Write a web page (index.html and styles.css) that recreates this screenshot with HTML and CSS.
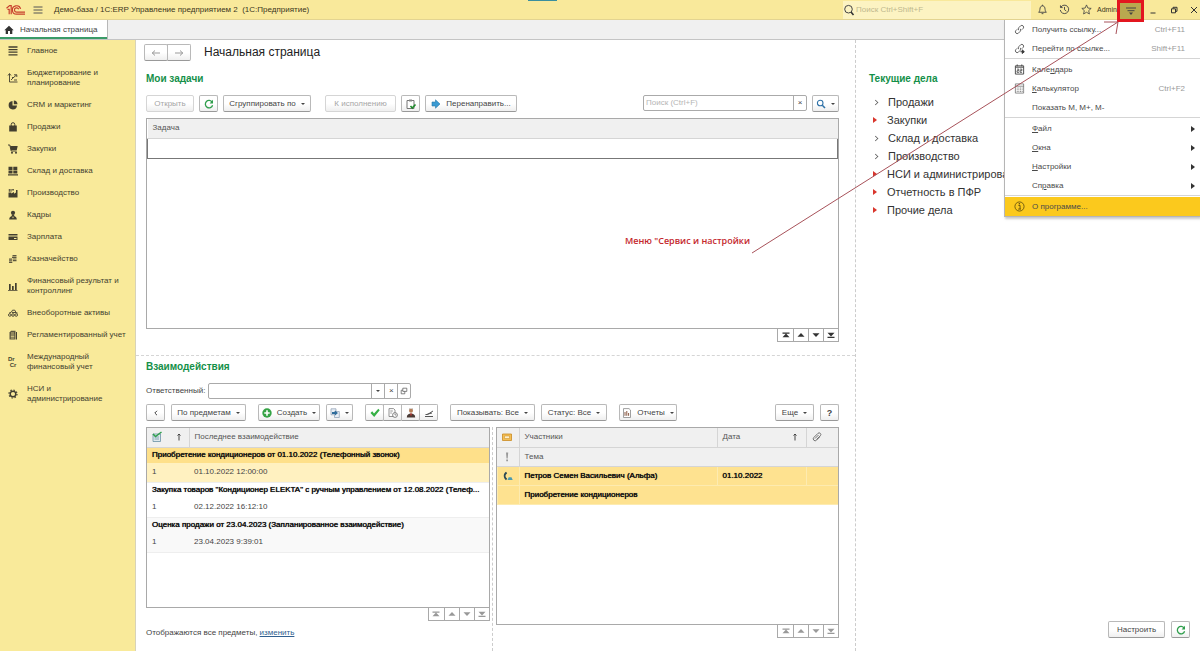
FILE: index.html
```html
<!DOCTYPE html>
<html lang="ru">
<head>
<meta charset="utf-8">
<title>1С:ERP Управление предприятием 2</title>
<link rel="stylesheet" href="styles.css">
</head>
<body>
<svg class="defs" aria-hidden="true">
  <symbol id="refresh" viewBox="0 0 10 10"><path d="M8.2 3.2A3.7 3.7 0 1 0 8.6 6.2" fill="none" stroke="#2f9e4c" stroke-width="1.3"/><path d="M9 .8v3.6H5.6z" fill="#2f9e4c"/></symbol>
  <symbol id="first" viewBox="0 0 8 6"><path d="M.5 .5h7v1.2h-7zM4 1.6l3.5 3.6h-7z"/></symbol>
  <symbol id="up" viewBox="0 0 8 6"><path d="M4 1l3.5 3.8h-7z"/></symbol>
  <symbol id="down" viewBox="0 0 8 6"><path d="M4 5L.5 1.2h7z"/></symbol>
  <symbol id="last" viewBox="0 0 8 6"><path d="M.5 4.8h7V6h-7zM4 4.6L.5 .8h7z"/></symbol>
  <symbol id="link" viewBox="0 0 12 12"><g fill="none" stroke="#555" stroke-width="1"><path d="M5.2 6.8a2 2 0 0 1 0-2.8L7.300 1.900a2 2 0 0 1 2.800 2.800L8.600 6.200"/><path d="M6.800 5.200a2 2 0 0 1 0 2.800L4.700 10.100a2 2 0 0 1-2.800-2.800L3.400 5.800"/></g></symbol>
</svg>

<header class="titlebar">
  <svg class="logo" viewBox="0 0 20 12" role="img" aria-label="1С"><g fill="none" stroke="#c8402c" stroke-width="1.200"><path d="M.5 4.200L3.600 1.600H5.200V10.300M1.500 5.300h1.700V10.300"/><path d="M14.600 4.800A4.200 4.200 0 1 0 10.700 10.200H19"/><path d="M12.700 5.200A2.200 2.200 0 1 0 10.700 8.200H19"/></g></svg>
  <button class="flat burger" aria-label="Меню"><svg viewBox="0 0 10 8"><path d="M.5 1h9M.5 4h9M.5 7h9" stroke="#555" fill="none"/></svg></button>
  <span class="apptitle">Демо-база / 1С:ERP Управление предприятием 2&nbsp; (1С:Предприятие)</span>
  <i class="marker"></i>
  <label class="globalsearch">
    <svg viewBox="0 0 12 12"><circle cx="5.500" cy="5.200" r="3.800" fill="none" stroke="#444"/><path d="M8 8l2.500 3" stroke="#333" stroke-width="1.600"/></svg>
    <input type="text" placeholder="Поиск Ctrl+Shift+F" aria-label="Поиск">
  </label>
  <div class="sysicons">
    <button class="flat" aria-label="Уведомления"><svg viewBox="0 0 12 12"><path d="M1.800 9h8.400C8.800 7.800 9 6.500 8.600 4.400 8.300 2.800 7.300 2 6 2S3.700 2.800 3.400 4.400C3 6.500 3.200 7.800 1.800 9zM5 10.500h2M6 .8V2" fill="none" stroke="#444"/></svg></button>
    <button class="flat" aria-label="История"><svg viewBox="0 0 12 12"><path d="M2 3.500A4.600 4.600 0 1 1 1.400 6.500M1.600 1.500v2.400H4M6 3.200v3l2 1.500" fill="none" stroke="#444"/></svg></button>
    <button class="flat" aria-label="Избранное"><svg viewBox="0 0 12 12"><path d="M6 1l1.500 3.400 3.600.4-2.700 2.400.8 3.700L6 9 2.800 10.900l.8-3.700L.9 4.800l3.600-.4z" fill="none" stroke="#444" stroke-width=".9"/></svg></button>
  </div>
  <span class="user">Admin</span>
  <button class="service" aria-label="Сервис и настройки"><svg viewBox="0 0 10 8"><path d="M0 1h10M1.500 3.700h7" stroke="#444" fill="none"/><path d="M3 5.500h4L5 8z" fill="#444"/></svg></button>
  <div class="wincontrols">
    <button class="flat" aria-label="Свернуть"><svg viewBox="0 0 10 10"><path d="M1.500 8h5" stroke="#333"/></svg></button>
    <button class="flat" aria-label="Восстановить"><svg viewBox="0 0 10 10"><path d="M2.500 3.800h4v4h-4zM4 3.500V2.300h4v4H6.800" fill="none" stroke="#333"/></svg></button>
    <button class="flat" aria-label="Закрыть"><svg viewBox="0 0 10 10"><path d="M2 2l6 6M8 2L2 8" stroke="#333"/></svg></button>
  </div>

  <nav class="menu" aria-label="Сервис и настройки">
    <button><svg><use href="#link"/></svg><span>Получить ссылку...</span><kbd>Ctrl+F11</kbd></button>
    <button><svg viewBox="0 0 12 12"><use href="#link"/><path d="M7 9.500h3.500M9 7.500l2.300 2L9 11.500z" stroke="#333" fill="#333"/></svg><span>Перейти по ссылке...</span><kbd>Shift+F11</kbd></button>
    <hr>
    <button><svg viewBox="0 0 12 12"><path d="M1.500 2h9v9h-9zM1.500 3.500h9M3.500.5v2M8.500.5v2" fill="none" stroke="#444"/><path d="M3.300 5.600h2v1.700h-2v1.800h2.200M6.600 5.600h2v1.700h-2v1.800h2.200" fill="none" stroke="#444" stroke-width=".9"/></svg><span>Кале<u>н</u>дарь</span></button>
    <button><svg viewBox="0 0 12 12"><path d="M1.500 1h9v10h-9zM1.500 3.500h9" fill="none" stroke="#666" stroke-width=".8"/><path d="M3 5.500h6.500M3 7.400h6.500M3 9.300h6.500" stroke="#777" stroke-dasharray="1 .8"/></svg><span><u>К</u>алькулятор</span><kbd>Ctrl+F2</kbd></button>
    <button><svg></svg><span>Показать М, М+, М-</span></button>
    <hr>
    <button class="sub"><svg></svg><span><u>Ф</u>айл</span></button>
    <button class="sub"><svg></svg><span><u>О</u>кна</span></button>
    <button class="sub"><svg></svg><span><u>Н</u>астройки</span></button>
    <button class="sub"><svg></svg><span>Сп<u>р</u>авка</span></button>
    <hr>
    <button class="active"><svg viewBox="0 0 12 12"><circle cx="6" cy="6" r="5" fill="none" stroke="#5b4a10" stroke-width=".9"/><path d="M4.800 4.800h1.800v4M4.600 8.800h3" fill="none" stroke="#5b4a10"/><path d="M5.200 2.300h1.400v1.300H5.200z" fill="#5b4a10"/></svg><span>О программе...</span></button>
  </nav>
  <div class="callout">
    <svg viewBox="0 0 372 236"><path d="M0 233L366 2M352 2h14l-2 12" fill="none" stroke="#a8525a"/></svg>
    <strong>Меню "Сервис и настройки</strong>
  </div>
</header>

<div class="tabs">
  <a class="tab" href="#"><svg viewBox="0 0 10 10"><path d="M5 .8L.3 5.300h1.400V9h2.300V6h2v3h2.300V5.300h1.400z" fill="#333"/></svg><span>Начальная страница</span></a>
</div>

<div class="workspace">
  <nav class="sidebar">
    <a href="#"><svg viewBox="0 0 10 10"><path d="M.5 1h9M.5 3.600h9M.5 6.200h9M.5 8.800h9" stroke="#433f30" stroke-width="1.300"/></svg><span>Главное</span></a>
    <a href="#"><svg viewBox="0 0 10 10"><path d="M1.500 1v8h8M0 2.500L1.500.5 3 2.500M3 7l2.500-2.500L8.500 2M6 1.800h2.800V4M4 4.500h2M6 7h3" fill="none" stroke="#433f30" stroke-width=".9"/></svg><span>Бюджетирование и планирование</span></a>
    <a href="#"><svg viewBox="0 0 10 10"><path d="M4.500 1v4.500H9A4.200 4.200 0 1 1 4.500 1z" fill="#433f30"/><path d="M5.800.5A4 4 0 0 1 9.500 4.300H5.800z" fill="#433f30"/></svg><span>CRM и маркетинг</span></a>
    <a href="#"><svg viewBox="0 0 10 10"><path d="M1.200 3.500h7.600v6H1.200z" fill="#433f30"/><path d="M3.200 5V2.500a1.800 1.800 0 0 1 3.600 0V5" fill="none" stroke="#433f30"/></svg><span>Продажи</span></a>
    <a href="#"><svg viewBox="0 0 10 10"><path d="M0 1h1.800l1.400 6h5.500" fill="none" stroke="#433f30"/><path d="M2.200 2h7.500L8.800 6H3z" fill="#433f30"/><circle cx="4" cy="8.800" r="1" fill="#433f30"/><circle cx="8" cy="8.800" r="1" fill="#433f30"/></svg><span>Закупки</span></a>
    <a href="#"><svg viewBox="0 0 10 10"><path d="M.5.8h4v3.400h-4zM5.300.8h4v3.400h-4zM.5 4.800h4v2.700h-4zM5.300 4.800h4v2.700h-4zM0 8.300h10v1.200H0z" fill="#433f30"/></svg><span>Склад и доставка</span></a>
    <a href="#"><svg viewBox="0 0 10 10"><path d="M.5 9.500V4.500h2.800v1L6 4v1.800L8 4.500V2h1.500v7.500zM.8 1h1v2.700h-1zM2.500 1h1v2.700h-1zM4.300 1h1.500v1.500H4.300z" fill="#433f30"/></svg><span>Производство</span></a>
    <a href="#"><svg viewBox="0 0 10 10"><circle cx="5" cy="2.800" r="2.100" fill="#433f30"/><path d="M1.200 9.500c0-2.500 1.500-3 2.600-3.500V4.500h2.400V6c1.100.5 2.600 1 2.600 3.500z" fill="#433f30"/><path d="M4.200 6.800h1.600L5 8.500z" fill="#f9ea9a"/></svg><span>Кадры</span></a>
    <a href="#"><svg viewBox="0 0 10 10"><path d="M.5 2h9v1.500h-9zM.5 4.500h9V8h-9z" fill="#433f30"/><path d="M6 6.500h2.500" stroke="#f9ea9a"/></svg><span>Зарплата</span></a>
    <a href="#"><svg viewBox="0 0 10 10"><path d="M4.500 1h4v1.200h-4zM4 2.700h4.500v1.200H4zM5 4.400h3.500v1.200H5zM5 6h3.500v1.200H5zM1 4.500h3.300v1.200H1zM1 6.200h3.300v1.200H1zM1 7.900h3.300v1.200H1z" fill="#5d573f"/></svg><span>Казначейство</span></a>
    <a href="#"><svg viewBox="0 0 10 10"><path d="M1 3h1.700v6H1zM4 5h1.700v4H4zM7 2h1.700v7H7zM0 9h9.500v.8H0z" fill="#433f30"/></svg><span>Финансовый результат и контроллинг</span></a>
    <a href="#"><svg viewBox="0 0 10 10"><g fill="none" stroke="#433f30" stroke-width=".9"><circle cx="1.800" cy="7" r="1.300"/><circle cx="5" cy="7" r="1.300"/><circle cx="8.200" cy="7" r="1.300"/><path d="M1 5.200L3.500 4l1-1.800h2.300L8 4.600l1.700.6M4 4.500h4"/></g></svg><span>Внеоборотные активы</span></a>
    <a href="#"><svg viewBox="0 0 10 10"><path d="M1.500 2.500L3 .8h4.500v8.700h-6z" fill="#5d573f"/><path d="M3 3h3M2.800 5h3.500M2.800 6.500h3.500M2.800 8h3.500" stroke="#f9ea9a" stroke-width=".7"/><path d="M8.500 2v7.500" stroke="#433f30"/></svg><span>Регламентированный учет</span></a>
    <a href="#"><b class="drcr">Dr<br>&nbsp;Cr</b><span>Международный финансовый учет</span></a>
    <a href="#"><svg viewBox="0 0 10 10"><circle cx="5" cy="5" r="2.800" fill="none" stroke="#433f30" stroke-width="1.400"/><circle cx="5" cy="5" r="4" fill="none" stroke="#433f30" stroke-width="1.200" stroke-dasharray="1.400 1.740"/></svg><span>НСИ и администрирование</span></a>
  </nav>

  <main class="main">
    <div class="left">
      <section class="tasks">
        <div class="pagehead">
          <div class="group">
            <button class="btn hist" aria-label="Назад"><svg viewBox="0 0 10 8"><path d="M1 4h8M4 1.500L1.300 4 4 6.500" fill="none" stroke="#999"/></svg></button><button class="btn hist" aria-label="Вперед"><svg viewBox="0 0 10 8"><path d="M1 4h8M6 1.500L8.700 4 6 6.500" fill="none" stroke="#999"/></svg></button>
          </div>
          <h1>Начальная страница</h1>
        </div>
        <h2>Мои задачи</h2>
        <div class="toolbar">
          <button class="btn w-m off">Открыть</button>
          <button class="btn w-s" aria-label="Обновить"><svg><use href="#refresh"/></svg></button>
          <button class="btn w-xl drop">Сгруппировать по</button>
          <button class="btn w-l off apart">К исполнению</button>
          <button class="btn w-s" aria-label="Выполнить"><svg viewBox="0 0 10 10"><path d="M1 1.500h7v8H1z" fill="#fff" stroke="#777"/><path d="M3 .5h3v2H3z" fill="#888"/><path d="M4.500 7l1.800 2L9.500 5.500" fill="none" stroke="#1f8a2c" stroke-width="1.600"/></svg></button>
          <button class="btn w-xxl"><svg viewBox="0 0 10 10"><path d="M1 3h3.500V.8L9 5 4.500 9.200V7H1z" fill="#3a9bd3" stroke="#2878a8" stroke-width=".6"/></svg>Перенаправить...</button>
          <div class="search">
            <input type="text" placeholder="Поиск (Ctrl+F)" aria-label="Поиск задачи"><button aria-label="Очистить">×</button>
          </div>
          <button class="btn w-find drop" aria-label="Найти"><svg viewBox="0 0 10 10"><circle cx="4.200" cy="4" r="2.800" fill="none" stroke="#2f72a8" stroke-width="1.100"/><path d="M6.300 6.200L9 9" stroke="#2f72a8" stroke-width="1.500"/></svg></button>
        </div>
        <div class="grid">
          <table><thead><tr><th>Задача</th></tr></thead><tbody><tr class="focus"><td></td></tr></tbody></table>
        </div>
        <div class="pager">
          <button aria-label="В начало"><svg><use href="#first"/></svg></button><button aria-label="Вверх"><svg><use href="#up"/></svg></button><button aria-label="Вниз"><svg><use href="#down"/></svg></button><button aria-label="В конец"><svg><use href="#last"/></svg></button>
        </div>
      </section>

      <section class="interactions">
        <h2>Взаимодействия</h2>
        <div class="field">
          <label for="resp">Ответственный:</label>
          <div class="combo">
            <input id="resp" type="text"><button aria-label="Выбрать"><i class="caret"></i></button><button aria-label="Очистить">×</button><button aria-label="Открыть"><svg viewBox="0 0 10 10"><path d="M3.500 1.500h5v4h-5zM3.500 4H1.500v4.500h4.500V5.500" fill="none" stroke="#555" stroke-width=".9"/></svg></button>
          </div>
        </div>
        <div class="toolbar">
          <button class="btn w-s" aria-label="Скрыть"><svg viewBox="0 0 10 10"><path d="M6 2.800L3.800 5 6 7.200" fill="none" stroke="#444"/></svg></button>
          <button class="btn w-sub drop">По предметам</button>
          <button class="btn w-new drop apart"><svg viewBox="0 0 10 10"><circle cx="5" cy="5" r="4.700" fill="#35a345"/><path d="M5 2.300v5.400M2.300 5h5.400" stroke="#fff" stroke-width="1.600"/></svg>Создать</button>
          <button class="btn w-find drop" aria-label="Создать на основании"><svg viewBox="0 0 10 10"><path d="M1 .8h5v6H1z" fill="#e8eef5" stroke="#8a9bb0" stroke-width=".7"/><path d="M4.500 3.500h4.800v6H4.500z" fill="#e8eef5" stroke="#8a9bb0" stroke-width=".7"/><path d="M2 4h3V2.500L8 5 5 7.500V6H2z" fill="#2f6d9c"/></svg></button>
          <div class="group apart">
            <button class="btn w-s" aria-label="Рассмотрено"><svg viewBox="0 0 10 10"><path d="M.5 5L2.200 3.300 4 5.500 8.300.8 9.700 2.200 4.200 9z" fill="#35b045"/></svg></button><button class="btn w-s" aria-label="Отложить"><svg viewBox="0 0 10 10"><path d="M1 .6h4.500L7 2v6.500H1z" fill="#fff" stroke="#777" stroke-width=".8"/><circle cx="7" cy="7" r="2.400" fill="#fff" stroke="#666" stroke-width=".8"/><path d="M7 5.500V7h1.300M2.300 3h2.500M2.300 5h1.500" stroke="#666" stroke-width=".7" fill="none"/></svg></button><button class="btn w-s" aria-label="Ответственный"><svg viewBox="0 0 10 10"><circle cx="5" cy="2.700" r="2" fill="#b87e58"/><path d="M3 2.300a2 2 0 0 1 4 0V1.500A1.500 1.500 0 0 0 5 .3 1.500 1.500 0 0 0 3 1.500z" fill="#3c2b22"/><path d="M.8 9.500c0-3 2-4 4.200-4s4.200 1 4.200 4z" fill="#4a3a35"/><path d="M4 5.500h2L5 8.500z" fill="#c53a36"/></svg></button><button class="btn w-s" aria-label="Тема"><svg viewBox="0 0 10 10"><path d="M1 8.500h8M9 3L3.500 6.500H1.500M3 6.300L8 5" fill="none" stroke="#555"/></svg></button>
          </div>
          <button class="btn w-show drop apart">Показывать: Все</button>
          <button class="btn w-stat drop">Статус: Все</button>
          <button class="btn w-rep drop apart"><svg viewBox="0 0 10 10"><path d="M1.500.6H7L8.500 2v7.500h-7z" fill="#fff" stroke="#888" stroke-width=".8"/><path d="M3 7.800V4M4.800 7.800V3M6.600 7.800V5" stroke="#8a5a44"/></svg>Отчеты</button>
          <button class="btn w-more drop end">Еще</button>
          <button class="btn w-s help">?</button>
        </div>
        <div class="panes">
          <div class="pane">
            <div class="grid">
              <table class="subjects">
                <colgroup><col class="c-num"><col></colgroup>
                <thead><tr><th><span class="pair"><svg viewBox="0 0 10 10"><path d="M1 2h7.500v7.500H1z" fill="#dfe9ee" stroke="#6a92a5" stroke-width=".8"/><path d="M2.500 5h4.500M2.500 7h4.500" stroke="#6a92a5" stroke-width=".8"/><path d="M1 2l2.500 2.500L9.500 0" fill="none" stroke="#2f9e4c" stroke-width="1.500"/></svg><svg viewBox="0 0 10 10"><path d="M5 8.500V2M3.500 3.500L5 2l1.500 1.500" fill="none" stroke="#444"/></svg></span></th><th>Последнее взаимодействие</th></tr></thead>
                <tbody class="sel"><tr class="title"><td colspan="2">Приобретение кондиционеров от 01.10.2022 (Телефонный звонок)</td></tr><tr><td>1</td><td>01.10.2022 12:00:00</td></tr></tbody>
                <tbody><tr class="title"><td colspan="2">Закупка товаров "Кондиционер ELEKTA" с ручным управлением от 12.08.2022 (Телеф...</td></tr><tr><td>1</td><td>02.12.2022 16:12:10</td></tr></tbody>
                <tbody class="alt"><tr class="title"><td colspan="2">Оценка продажи от 23.04.2023 (Запланированное взаимодействие)</td></tr><tr><td>1</td><td>23.04.2023 9:39:01</td></tr></tbody>
              </table>
            </div>
            <div class="pager dim">
              <button aria-label="В начало"><svg><use href="#first"/></svg></button><button aria-label="Вверх"><svg><use href="#up"/></svg></button><button aria-label="Вниз"><svg><use href="#down"/></svg></button><button aria-label="В конец"><svg><use href="#last"/></svg></button>
            </div>
            <p class="note">Отображаются все предметы, <a href="#">изменить</a></p>
          </div>
          <div class="splitter"></div>
          <div class="pane">
            <div class="grid">
              <table class="mails">
                <colgroup><col class="c-icon"><col><col class="c-date"><col class="c-clip"></colgroup>
                <thead>
                  <tr><th><svg viewBox="0 0 10 10"><path d="M.5 2h9v6.500h-9z" fill="#f4bf55" stroke="#c98a22" stroke-width=".8"/><path d="M2.500 4h5v2.500h-5z" fill="#fdf0cd" stroke="#c98a22" stroke-width=".5"/></svg></th><th>Участники</th><th><span class="spread">Дата<svg viewBox="0 0 10 10"><path d="M5 8.500V2M3.500 3.500L5 2l1.500 1.500" fill="none" stroke="#444"/></svg></span></th><th><svg viewBox="0 0 10 10"><path d="M3 6.500L6.500 3M7.800 4.800L4.500 8.200a1.900 1.900 0 0 1-2.700-2.700L6 1.300a1.700 1.700 0 0 1 2.400 2.400L4.500 7.500" fill="none" stroke="#666" stroke-width=".9"/></svg></th></tr>
                  <tr><th><svg viewBox="0 0 10 10"><path d="M4 .5h2.200L5.700 6.500H4.500zM4.200 7.500h1.800v1.800H4.200z" fill="#999"/></svg></th><th colspan="3">Тема</th></tr>
                </thead>
                <tbody>
                  <tr><td><svg viewBox="0 0 10 10"><path d="M3 .8C0 2.500 0 7 3 9.200l1.200-1.500-1-1C2.300 5.500 2.300 4.500 3.200 3.300l1-1z" fill="#2c4a55"/><path d="M4.500 9l1.200-2.800h2.800L9.700 9z" fill="#4a9ab0"/></svg></td><td>Петров Семен Васильевич (Альфа)</td><td>01.10.2022</td><td></td></tr>
                  <tr><td></td><td colspan="3">Приобретение кондиционеров</td></tr>
                </tbody>
              </table>
            </div>
            <div class="pager dim">
              <button aria-label="В начало"><svg><use href="#first"/></svg></button><button aria-label="Вверх"><svg><use href="#up"/></svg></button><button aria-label="Вниз"><svg><use href="#down"/></svg></button><button aria-label="В конец"><svg><use href="#last"/></svg></button>
            </div>
          </div>
        </div>
      </section>
    </div>

    <aside class="right">
      <h2>Текущие дела</h2>
      <ul>
        <li>Продажи</li>
        <li class="hot">Закупки</li>
        <li>Склад и доставка</li>
        <li>Производство</li>
        <li class="hot">НСИ и администрирование</li>
        <li class="hot">Отчетность в ПФР</li>
        <li class="hot">Прочие дела</li>
      </ul>
      <div class="foot">
        <button class="btn w-conf">Настроить</button>
        <button class="btn w-s" aria-label="Обновить"><svg><use href="#refresh"/></svg></button>
      </div>
    </aside>
  </main>
</div>
</body>
</html>
```
FILE: styles.css
```css
* { box-sizing: border-box; }
body {
  margin: 0;
  min-height: 100vh;
  display: flex;
  flex-direction: column;
  font: 8px/10px "Liberation Sans", Arial, sans-serif;
  color: #444;
  background: #fff;
}
button, input { font: inherit; color: inherit; margin: 0; padding: 0; border: 0; background: none; min-width: 0; }
input:focus { outline: 0; }
::placeholder { color: #b5b5b5; opacity: 1; }
h1, h2, ul, p { margin: 0; padding: 0; font-weight: normal; }
svg { width: 10px; height: 10px; flex: none; display: block; overflow: visible; }
.defs { position: absolute; width: 0; height: 0; }

/* Title bar */
.titlebar { position: relative; display: flex; align-items: center; height: 20px; background: #f9e99b; border-bottom: 1px solid #e3d491; color: #3b3620; }
.logo { width: 20px; height: 12px; margin-left: 6px; }
.flat { display: flex; align-items: center; justify-content: center; width: 22px; height: 18px; }
.burger { margin-left: 1px; }
.burger svg { height: 8px; }
.apptitle { margin-left: 5px; white-space: nowrap; }
.marker { position: absolute; left: 44%; top: 0; width: 29px; height: 1px; background: #3a8f9e; }
.globalsearch { display: flex; align-items: center; width: 188px; height: 18px; margin-left: auto; background: #fcf3c2; }
.globalsearch svg { width: 12px; height: 12px; }
.globalsearch input { flex: 1; margin-left: 1px; }
.globalsearch ::placeholder { color: #c0b88e; }
.sysicons { display: flex; }
.sysicons svg { width: 11px; height: 11px; }
.user { width: 20px; font-size: 7px; white-space: nowrap; }
.service { display: flex; align-items: center; justify-content: center; width: 27px; height: 22px; margin-top: 3px; border: 3px solid #e3161f; background: #b9a84f; z-index: 3; }
.service svg { height: 8px; }
.wincontrols { display: flex; margin-right: -4px; }
.wincontrols .flat { width: 20px; }

/* Service menu */
.menu { position: absolute; z-index: 2; right: 0; top: 20px; width: 196px; background: #fff; border: solid #b5b5b5; border-width: 0 0 1px 1px; box-shadow: 1px 2px 2px #9998; color: #4a4a4a; }
.menu button { display: flex; align-items: center; width: 100%; height: 19px; padding: 0 15px 0 9px; text-align: left; }
.menu svg { width: 11px; height: 11px; margin-right: 7px; }
.menu kbd { margin-left: auto; font: inherit; color: #999; }
.menu hr { height: 2px; margin: 0; border: 0; border-top: 1px solid #d5d5d5; }
.menu .sub { padding-right: 5px; }
.menu .sub::after { content: ""; margin-left: auto; border: solid transparent; border-width: 3px 0 3px 4px; border-left-color: #333; }
.menu .active { background: #fbc91d; }
.callout { position: absolute; z-index: 4; right: 76px; top: 20px; pointer-events: none; }
.callout svg { width: 372px; height: 236px; }
.callout strong { position: absolute; right: 374px; top: 215px; white-space: nowrap; font: 600 9px/12px "Open Sans", sans-serif; color: #c4282d; }

/* Tabs */
.tabs { display: flex; height: 20px; background: #f0f0f0; border-bottom: 1px solid #c4c4c4; }
.tab { display: flex; align-items: center; gap: 6px; padding: 0 10px 0 4px; background: #fff; border-right: 1px solid #b8b8b8; box-shadow: inset 0 -2px #3a9b68; color: inherit; text-decoration: none; }

/* Sections panel */
.workspace { flex: 1; display: flex; }
.sidebar { flex: none; width: 136px; background: #f9ea9a; border-right: 1px solid #d8d3b8; }
.sidebar a { display: flex; align-items: center; gap: 9px; padding: 6px 8px; color: #433f30; text-decoration: none; }
.sidebar span { flex: 1; }
.drcr { width: 10px; font: bold 6px/6px "Liberation Sans", sans-serif; }

/* Work area */
.main { flex: 1; display: grid; grid-template-columns: 720fr 344fr; min-width: 0; }
.left { display: flex; flex-direction: column; border-right: 1px dashed #ccc; min-width: 0; }
.tasks, .interactions { display: flex; flex-direction: column; padding: 4px 16px 0 10px; }
.tasks { flex: 298 0 0; padding-bottom: 13px; }
.interactions { flex: 291 0 0; border-top: 1px dashed #d5d5d5; }
.pagehead { display: flex; align-items: center; gap: 13px; margin-left: -2px; }
h1 { font-size: 12px; line-height: 17px; color: #222; }
h2 { font-size: 10px; line-height: 14px; font-weight: bold; color: #149049; }
.tasks h2 { margin: 11px 0 9px; }

.btn { display: flex; align-items: center; justify-content: center; gap: 5px; height: 17px; border: 1px solid #b9b9b9; border-bottom-color: #999; border-radius: 2px; background: linear-gradient(#fff 50%, #efefef); color: #444; white-space: nowrap; }
.btn.off { color: #a5a5a5; border-color: #d5d5d5; }
.drop::after, .caret { content: ""; border: solid transparent; border-width: 2px 2px 0; border-top-color: #444; }
.group { display: flex; }
.group .btn + .btn { margin-left: -1px; border-top-left-radius: 0; border-bottom-left-radius: 0; }
.hist { width: 24px; }
.hist svg { height: 8px; }
.w-s { width: 19px; }
.w-find { width: 27px; }
.w-m { width: 48px; }
.w-l { width: 71px; }
.w-xl { width: 88px; }
.w-xxl { width: 92px; }
.w-sub { width: 75px; }
.w-new { width: 62px; }
.w-show { width: 85px; }
.w-stat { width: 66px; }
.w-rep { width: 58px; }
.w-more { width: 39px; }
.w-conf { width: 57px; }
.help { font-weight: bold; font-size: 9px; }
.toolbar { display: flex; gap: 6px; }
.tasks .toolbar { gap: 5px; }
.toolbar .apart { margin-left: 6px; }
.tasks .toolbar .apart { margin-left: 9px; }
.toolbar .end { margin-left: auto; }
.search { display: flex; width: 164px; height: 16px; margin-left: auto; border: 1px solid #aaa; border-radius: 2px; }
.search input { flex: 1; padding-left: 2px; }
.search button { width: 13px; border-left: 1px solid #aaa; }

.grid { flex: 1; border: 1px solid #a9a9a9; background: #fff; }
.tasks .grid { margin-top: 6px; }
table { width: 100%; border-collapse: collapse; table-layout: fixed; }
th { height: 19px; padding: 0 5px; background: #f0f0f0; border: 1px solid #d5d5d5; border-width: 0 0 1px 1px; text-align: left; font-weight: normal; color: #555; }
th:first-child, td:first-child { border-left: 0; }
td { padding: 0 5px; }
.focus td { height: 20px; border: 1px solid #777; }
.tasks .focus td:first-child { border-left: 1px solid #777; }

.pager { display: flex; align-self: flex-end; margin-top: -1px; height: 14px; border: 1px solid #a9a9a9; background: #fff; fill: #333; }
.pager button { display: flex; align-items: center; justify-content: center; width: 15px; }
.pager button + button { border-left: 1px solid #a9a9a9; }
.pager svg { width: 8px; height: 6px; }
.dim { fill: #999; }

.field { display: flex; align-items: center; gap: 3px; margin: 9px 0 5px; white-space: nowrap; }
.combo { display: flex; width: 203px; height: 16px; border: 1px solid #aaa; border-radius: 2px; }
.combo input { flex: 1; }
.combo button { display: flex; align-items: center; justify-content: center; width: 13px; border-left: 1px solid #aaa; }
.combo svg { width: 8px; height: 8px; }

.panes { flex: 1; display: grid; grid-template-columns: 1fr 6px 1fr; margin-top: 6px; }
.pane { display: flex; flex-direction: column; min-width: 0; padding-bottom: 13px; }
.pane:first-child { padding-bottom: 0; }
.splitter { margin-left: 2px; border-left: 1px dashed #ccc; }
.note { padding: 7px 0 13px; }
.note a { color: #2f5f8f; }
.c-num { width: 42px; }
.c-icon { width: 22px; }
.c-date { width: 89px; }
.c-clip { width: 32px; }
.pair, .spread { display: flex; justify-content: space-between; align-items: center; }
.spread { padding-right: 1px; }
.subjects td { height: 19px; border-bottom: 1px solid #eee; color: #444; }
.subjects .title td { height: 16px; border: 0; white-space: nowrap; }
.subjects .title td, .mails td { color: #111; text-shadow: 0 0 0 #111, 0 0 1px #1118; }
.subjects .sel td { background: #fff1c0; }
.subjects .sel .title td { background: #fee08a; }
.subjects .alt td { background: #f9f9f9; }
.mails td { height: 19px; background: #fee290; border: 1px solid #fdebb0; border-width: 0 0 1px 1px; }

/* Current tasks */
.right { display: flex; flex-direction: column; padding: 32px 10px 13px 13px; min-width: 0; }
.right ul { margin-top: 7px; list-style: none; font-size: 11px; line-height: 18px; color: #333; }
.right li { display: flex; align-items: center; padding-left: 4px; white-space: nowrap; }
.right li::before { content: ""; width: 4px; height: 4px; margin-right: 10px; border: solid #555; border-width: 1px 1px 0 0; transform: rotate(45deg) scale(.8); }
.right .hot::before { width: 0; height: 0; margin: 0 10px 0 0; border: solid transparent; border-width: 3px 0 3px 4px; border-left-color: #d9352c; transform: none; }
.foot { display: flex; justify-content: flex-end; gap: 6px; margin-top: auto; }
```
